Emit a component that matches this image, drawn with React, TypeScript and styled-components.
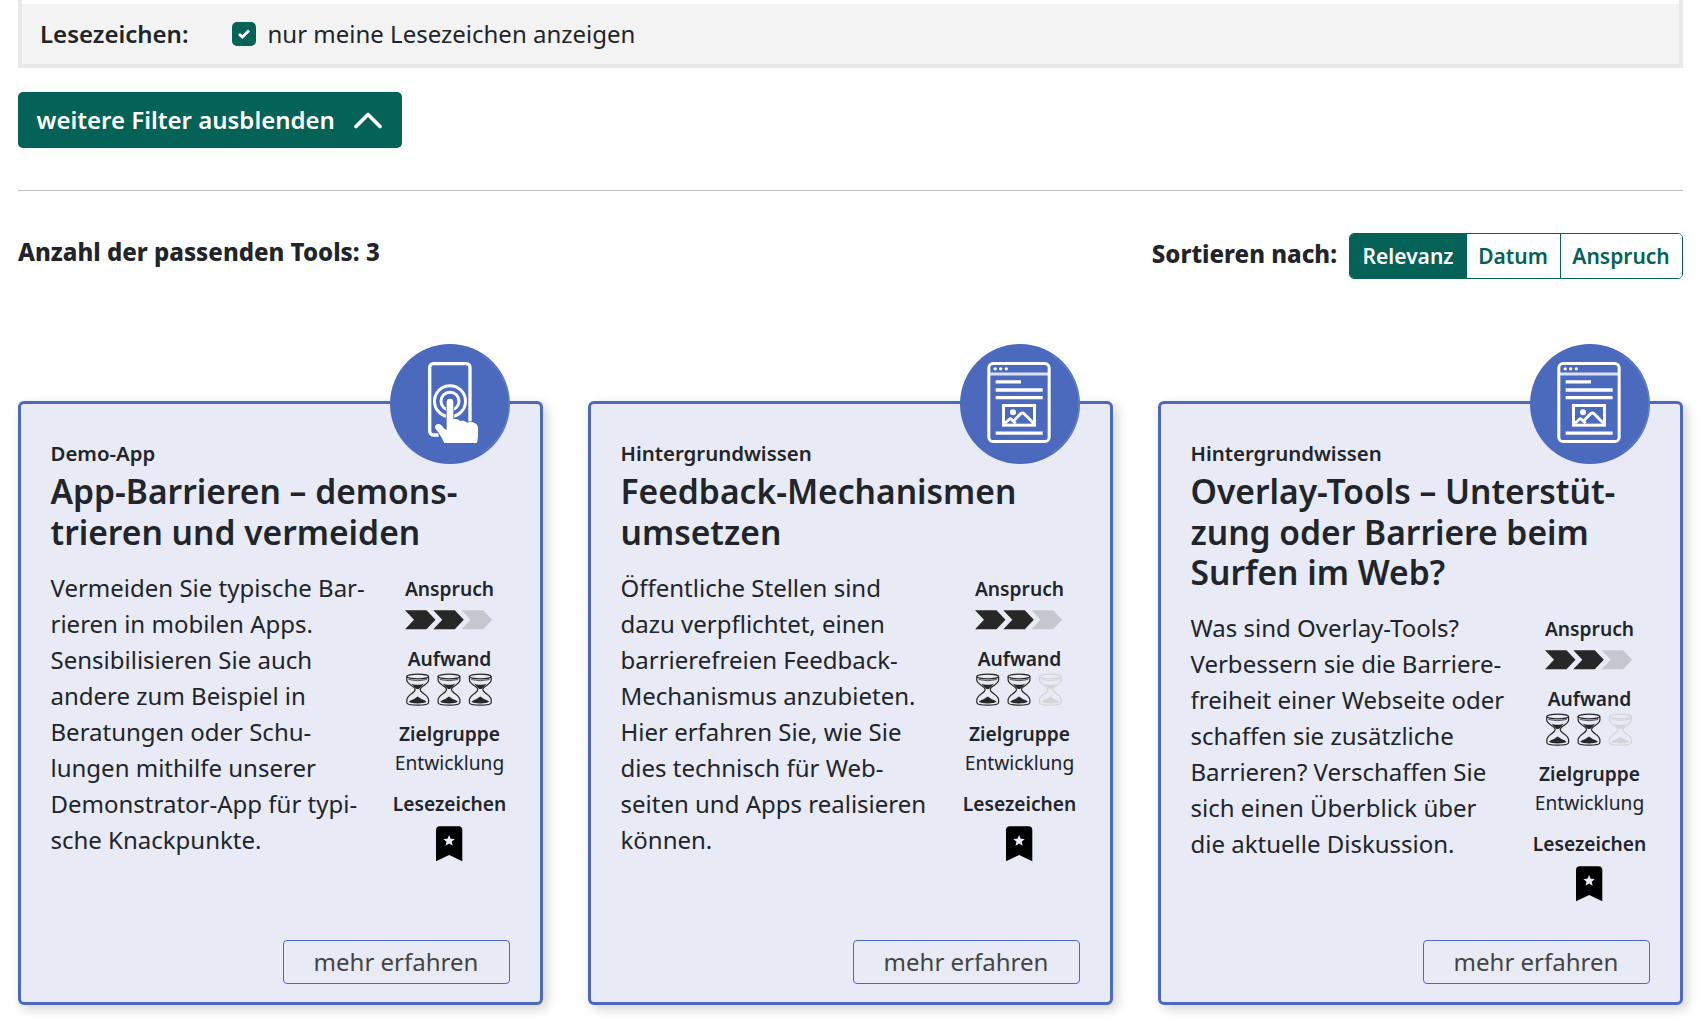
import React from 'react';
import styled, { createGlobalStyle } from 'styled-components';

const GREEN = '#046256';
const BLUE = '#4b6abd';
const INK = '#212529';
const TINT = '#e8eaf6';

const GlobalStyle = createGlobalStyle`
  *, *::before, *::after { box-sizing: border-box; }
  html { overflow: hidden; }
  body {
    margin: 0;
    background: #fff;
    color: ${INK};
    font-family: 'Noto Sans', 'Open Sans', sans-serif;
    font-size: 24px;
    line-height: 36px;
  }
  button { font-family: inherit; cursor: pointer; }
`;

const Page = styled.main`
  display: flex;
  flex-direction: column;
  width: 1701px;
  height: 1021px;
  padding: 0 18px;
  overflow: hidden;
`;

const FilterPanel = styled.section`
  flex: none;
  height: 68px;
  padding-top: 4px;
  border: 4px solid #e9e9e9;
  border-top: 0;
`;

const FilterRow = styled.div`
  display: flex;
  align-items: center;
  height: 60px;
  padding: 0 18px;
  background: #f3f3f3;
`;

const FilterName = styled.span`
  width: 192px;
  font-weight: 600;
`;

const CheckLabel = styled.label`
  display: flex;
  align-items: center;
  gap: 11.5px;
`;

const CheckBox = styled.span`
  display: flex;
  width: 24px;
  height: 24px;
  border-radius: 5px;
  background: ${GREEN};
`;

const ToggleButton = styled.button`
  flex: none;
  display: flex;
  align-items: center;
  justify-content: space-between;
  width: 384px;
  height: 56px;
  margin-top: 24px;
  padding: 0 20px 2px 18.5px;
  border: 0;
  border-radius: 5px;
  background: ${GREEN};
  color: #fff;
  font-size: 24px;
  font-weight: 600;
`;

const Rule = styled.hr`
  flex: none;
  width: 100%;
  height: 1px;
  margin: 42px 0 0;
  border: 0;
  background: #c0c1c2;
`;

const ResultBar = styled.div`
  flex: none;
  display: flex;
  justify-content: space-between;
  align-items: flex-start;
  height: 46px;
  margin-top: 42px;
`;

const BarText = styled.strong<{ $top: number }>`
  padding-top: ${(p) => p.$top}px;
  font-weight: 800;
`;

const Sorting = styled.div`
  display: flex;
  gap: 12px;
`;

const SortGroup = styled.div`
  display: flex;
  width: 334px;
  height: 46px;
  overflow: hidden;
  border: 1px solid ${GREEN};
  border-radius: 5px;
`;

const SortButton = styled.button<{ $active?: boolean; $width: number }>`
  width: ${(p) => p.$width}px;
  padding: 0 1px 0 0;
  border: 0;
  background: ${(p) => (p.$active ? GREEN : '#fff')};
  color: ${(p) => (p.$active ? '#fff' : GREEN)};
  font-size: 21px;
  font-weight: 600;
  &:last-child { border-left: 1px solid ${GREEN}; }
`;

const Cards = styled.div`
  flex: none;
  display: grid;
  grid-template-columns: repeat(3, 525px);
  gap: 45px;
  height: 604px;
  margin-top: 122px;
`;

const CardBox = styled.article`
  position: relative;
  display: flex;
  flex-direction: column;
  padding: 33px 30px 18px 29.5px;
  border: 3px solid ${BLUE};
  border-radius: 6px;
  background: ${TINT};
  box-shadow: 4px 4px 12px rgba(0, 0, 0, 0.18);
`;

const Badge = styled.div`
  position: absolute;
  top: -60px;
  right: 30px;
  width: 120px;
  height: 120px;
  border-radius: 50%;
  background: ${BLUE};
`;

const Kind = styled.div`
  font-size: 20.4px;
  font-weight: 600;
  line-height: 32px;
`;

const Title = styled.h2`
  margin: 2.2px 0 0;
  font-size: 33.6px;
  font-weight: 600;
  line-height: 40.32px;
`;

const Body = styled.div`
  display: flex;
  justify-content: space-between;
  margin-top: 18px;
`;

const Teaser = styled.p`
  width: 316px;
  margin: 0;
`;

const Facts = styled.div`
  display: flex;
  flex-direction: column;
  align-items: center;
  width: 121px;
`;

const FactName = styled.div<{ $top?: number }>`
  margin-top: ${(p) => p.$top ?? 0}px;
  font-size: 19.2px;
  font-weight: 600;
  line-height: 30px;
`;

const FactText = styled.div`
  font-size: 19.2px;
  line-height: 28px;
`;

const Drawing = styled.svg<{ $top?: number }>`
  display: block;
  flex: none;
  margin-top: ${(p) => p.$top ?? 0}px;
`;

const MoreButton = styled.button`
  align-self: flex-end;
  width: 227px;
  height: 44px;
  margin-top: auto;
  padding: 0 1px 2px 0;
  border: 1px solid ${BLUE};
  border-radius: 4px;
  background: transparent;
  color: #444;
  font-size: 24px;
`;

const Glint = () => (
  <path d="M276 34A172 172 0 0 1 276 326" fill="none" stroke="#fff" strokeOpacity=".25" strokeWidth="2" />
);

const PhoneIcon = () => (
  <Drawing width="120" height="120" viewBox="0 0 360 360">
    <Glint />
    <g fill="none" stroke="#fff">
      <path d="M146 273H130a11 11 0 0 1-11-11V70a11 11 0 0 1 11-11H229a11 11 0 0 1 11 11V234" strokeWidth="10" />
      <circle cx="180" cy="171.500" r="46.500" strokeWidth="9" />
      <circle cx="180" cy="171.500" r="27" strokeWidth="9" />
    </g>
    <path
      d="M170 174a10 10 0 0 1 20 0V226C197 224 205 225 210 231C217 229 225 230 231 236C239 233 248 234 255 238C262 241 264 247 264 255C265 270 264 284 261 297H163C158 287 153 277 147 268L137 255C133 247 137 241 144 240C150 239 154 242 157 247C160 252 164 256 170 258Z"
      fill="#fff"
      stroke={BLUE}
      strokeWidth="5"
      paintOrder="stroke"
    />
  </Drawing>
);

const PageIcon = () => (
  <Drawing width="120" height="120" viewBox="0 0 360 360">
    <Glint />
    <g fill="none" stroke="#fff">
      <rect x="86.500" y="58.500" width="181" height="234" rx="13" strokeWidth="9" />
      <path d="M88 90H266" strokeWidth="9" strokeOpacity=".8" />
      <path d="M107 113.500H183M107 138H248M107 161H248M107 267.500H248" strokeWidth="10" />
      <rect x="130.500" y="184.500" width="93" height="59" strokeWidth="9" />
      <path d="M135 238L148 226Q151 223 154 226L167 238M157 235L182 209Q187 205 192 209L222 239" strokeWidth="8.500" />
    </g>
    <g fill="#fff">
      <circle cx="105.500" cy="74.500" r="5" />
      <circle cx="122" cy="74.500" r="5" />
      <circle cx="139" cy="74.500" r="5" />
      <circle cx="159" cy="205" r="9" />
    </g>
  </Drawing>
);

const Arrows = () => (
  <Drawing $top={6} width="89" height="20" viewBox="0 0 89 20">
    {[0, 1, 2].map((i) => (
      <path
        key={i}
        transform={`translate(${i * 28.3} 0.300)`}
        d="M0 0H21.500L30.500 9.500L21.500 19H0L9 9.500Z"
        fill={i < 2 ? '#272727' : '#c4c7ce'}
      />
    ))}
  </Drawing>
);

const Hourglasses = ({ filled }: { filled: number }) => (
  <Drawing $top={-1} width="89" height="34" viewBox="0 0 89 34">
    {[0, 1, 2].map((i) => {
      const color = i < filled ? '#272727' : '#d4d4d4';
      return (
        <g key={i} transform={`translate(${1 + i * 31.3} 0.500)`} fill="none" stroke={color} strokeWidth="1.200">
          <ellipse cx="11.700" cy="3" rx="10.900" ry="2.300" />
          <path d="M.8 3V6.500C.8 11 9.200 12.500 9.200 16S.8 21.500.8 26.500V29Q.8 31.600 11.700 31.600T22.600 29V26.500C22.600 21.500 14.200 19.500 14.200 16S22.600 11 22.600 6.500V3" />
          <path d="M2.500 6Q11.700 8.500 20.900 6" strokeWidth=".8" />
          <path d="M5.500 10Q9 11.800 11.700 11.200Q14.400 11.800 17.900 10Q15.500 13.500 12.700 15.500H10.700Q8 13.500 5.500 10ZM2.800 28.300Q4.500 26.400 8 25.400L11.700 23L15.400 25.400Q19 26.400 20.600 28.300Q18 30 11.700 30T2.800 28.300Z" fill={color} stroke="none" />
        </g>
      );
    })}
  </Drawing>
);

const Bookmark = () => (
  <Drawing $top={7} width="27" height="36" viewBox="0 0 27 36">
    <path d="M0 35.200V4Q0 .2 3.800 .2H22.500Q26.300 .2 26.300 4V35.200L13.200 29Z" fill="#000" />
    <path
      d="M13.100 9L14.700 12.800L18.800 13.100L15.700 15.700L16.700 19.700L13.100 17.500L9.500 19.700L10.500 15.700L7.400 13.100L11.500 12.800Z"
      fill={TINT}
    />
  </Drawing>
);

type Tool = { kind: string; title: string; text: string; effort: number; icon: 'phone' | 'page' };

const tools: Tool[] = [
  {
    kind: 'Demo-App',
    title: 'App-Barrieren – demons\u00adtrieren und vermeiden',
    text: 'Vermeiden Sie typische Bar\u00adrieren in mobilen Apps. Sensibilisieren Sie auch andere zum Beispiel in Beratungen oder Schu\u00adlungen mithilfe unserer Demonstrator-App für typi\u00adsche Knackpunkte.',
    effort: 3,
    icon: 'phone',
  },
  {
    kind: 'Hintergrundwissen',
    title: 'Feedback-Mechanismen umsetzen',
    text: 'Öffentliche Stellen sind dazu verpflichtet, einen barrierefreien Feedback-Mechanismus anzubieten. Hier erfahren Sie, wie Sie dies technisch für Web\u00adseiten und Apps realisieren können.',
    effort: 2,
    icon: 'page',
  },
  {
    kind: 'Hintergrundwissen',
    title: 'Overlay-Tools – Unterstüt\u00adzung oder Barriere beim Surfen im Web?',
    text: 'Was sind Overlay-Tools? Verbessern sie die Barriere\u00adfreiheit einer Webseite oder schaffen sie zusätzliche Barrieren? Verschaffen Sie sich einen Überblick über die aktuelle Diskussion.',
    effort: 2,
    icon: 'page',
  },
];

const ToolCard = ({ tool }: { tool: Tool }) => (
  <CardBox>
    <Badge>{tool.icon === 'phone' ? <PhoneIcon /> : <PageIcon />}</Badge>
    <Kind>{tool.kind}</Kind>
    <Title>{tool.title}</Title>
    <Body>
      <Teaser>{tool.text}</Teaser>
      <Facts>
        <FactName $top={4}>Anspruch</FactName>
        <Arrows />
        <FactName $top={14}>Aufwand</FactName>
        <Hourglasses filled={tool.effort} />
        <FactName $top={12}>Zielgruppe</FactName>
        <FactText>Entwicklung</FactText>
        <FactName $top={12}>Lesezeichen</FactName>
        <Bookmark />
      </Facts>
    </Body>
    <MoreButton>mehr erfahren</MoreButton>
  </CardBox>
);

export default function App() {
  return (
    <>
      <GlobalStyle />
      <Page lang="de">
        <FilterPanel>
          <FilterRow>
            <FilterName>Lesezeichen:</FilterName>
            <CheckLabel>
              <CheckBox>
                <Drawing width="24" height="24" viewBox="0 0 24 24">
                  <path d="M7 12L10.400 15L17 8.500" fill="none" stroke="#fff" strokeWidth="2.800" />
                </Drawing>
              </CheckBox>
              nur meine Lesezeichen anzeigen
            </CheckLabel>
          </FilterRow>
        </FilterPanel>
        <ToggleButton>
          weitere Filter ausblenden
          <Drawing $top={2} width="28" height="17" viewBox="0 0 28 17">
            <path d="M2 14.500L14 2.500L26 14.500" fill="none" stroke="#fff" strokeWidth="3.700" strokeLinecap="round" strokeLinejoin="round" />
          </Drawing>
        </ToggleButton>
        <Rule />
        <ResultBar>
          <BarText $top={1}>Anzahl der passenden Tools: 3</BarText>
          <Sorting>
            <BarText $top={3}>Sortieren nach:</BarText>
            <SortGroup>
              <SortButton $active $width={117}>Relevanz</SortButton>
              <SortButton $width={93}>Datum</SortButton>
              <SortButton $width={122}>Anspruch</SortButton>
            </SortGroup>
          </Sorting>
        </ResultBar>
        <Cards>
          {tools.map((tool) => (
            <ToolCard key={tool.title} tool={tool} />
          ))}
        </Cards>
      </Page>
    </>
  );
}
